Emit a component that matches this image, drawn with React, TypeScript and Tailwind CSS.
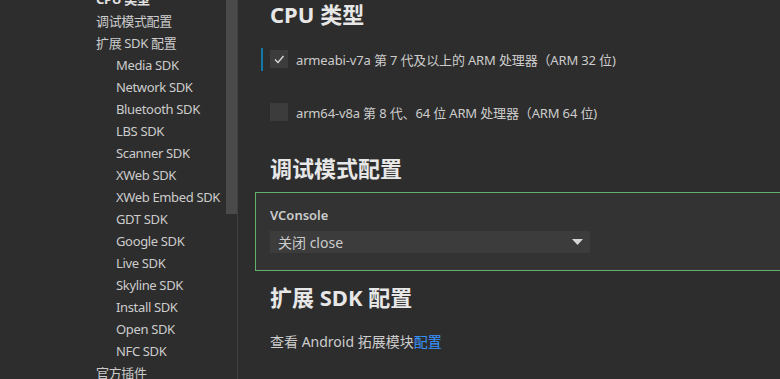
import React from "react";

const font = { fontFamily: '"Noto Sans", "Noto Sans CJK SC", sans-serif' };

const topItems: { label: string; indent: boolean; bold?: boolean }[] = [
  { label: "CPU 类型", indent: false, bold: true },
  { label: "调试模式配置", indent: false },
  { label: "扩展 SDK 配置", indent: false },
  { label: "Media SDK", indent: true },
  { label: "Network SDK", indent: true },
  { label: "Bluetooth SDK", indent: true },
  { label: "LBS SDK", indent: true },
  { label: "Scanner SDK", indent: true },
  { label: "XWeb SDK", indent: true },
  { label: "XWeb Embed SDK", indent: true },
  { label: "GDT SDK", indent: true },
  { label: "Google SDK", indent: true },
  { label: "Live SDK", indent: true },
  { label: "Skyline SDK", indent: true },
  { label: "Install SDK", indent: true },
  { label: "Open SDK", indent: true },
  { label: "NFC SDK", indent: true },
  { label: "官方插件", indent: false },
];

function Check() {
  return (
    <svg width="12" height="12" viewBox="0 0 12 12">
      <polyline points="2,6.5 5,9.5 10.5,3" fill="none" stroke="#d8d8d8" strokeWidth="1.4" />
    </svg>
  );
}

export default function App() {
  return (
    <div className="w-[780px] h-[379px] overflow-hidden bg-[#2d2d2d] flex text-[#cccccc]" style={font}>
      {/* Sidebar */}
      <div className="flex h-full shrink-0">
        <div className="w-[226px] h-full overflow-hidden">
          <div className="mt-[-11px]">
            {topItems.map((it) => (
              <div
                key={it.label}
                className={`h-[22px] flex items-center text-[13px] tracking-[-0.35px] whitespace-nowrap ${it.indent ? "pl-[116px]" : "pl-[96px]"} ${it.bold ? "font-bold text-[#e0e0e0]" : ""}`}
              >
                {it.label}
              </div>
            ))}
          </div>
        </div>
        <div className="w-[11px] h-full">
          <div className="w-full h-[214px] bg-[#4a4a4a]" />
        </div>
        <div className="w-px h-full bg-[#404040]" />
      </div>

      {/* Main */}
      <div className="flex-1 pl-[32px] overflow-hidden">
        <div className="h-[28px] leading-[28px] text-[22px] font-bold text-[#e7e7e7]">CPU 类型</div>

        <div className="mt-[20px] h-[23px] flex items-start ml-[-9px]">
          <div className="w-[2px] h-[23px] bg-[#0f7aa6]" />
          <div className="ml-[7px] mt-[2px] w-[18px] h-[18px] bg-[#3c3c3c] flex items-center justify-center">
            <Check />
          </div>
          <div className="ml-[8px] text-[13px] tracking-[-0.15px] leading-[18px] mt-[3px] whitespace-nowrap">
            armeabi-v7a 第 7 代及以上的 ARM 处理器（ARM 32 位)
          </div>
        </div>

        <div className="mt-[30px] h-[23px] flex items-start">
          <div className="mt-[2px] w-[18px] h-[18px] bg-[#3c3c3c]" />
          <div className="ml-[8px] text-[13px] tracking-[-0.15px] leading-[18px] mt-[3px] whitespace-nowrap">
            arm64-v8a 第 8 代、64 位 ARM 处理器（ARM 64 位)
          </div>
        </div>

        <div className="mt-[30px] h-[28px] leading-[28px] text-[22px] font-bold text-[#e7e7e7]">调试模式配置</div>

        <div className="mt-[10px] ml-[-15px] w-[600px] border border-[#62b06b] bg-[#333333] pl-[14px] pt-[13px] pb-[17px]">
          <div className="text-[13px] leading-[18px] font-semibold text-[#cccccc]">VConsole</div>
          <div className="mt-[7px] w-[320px] h-[22px] bg-[#3c3c3c] flex items-center justify-between pl-[8px] pr-[7px]">
            <span className="text-[14px] text-[#cccccc]">关闭 close</span>
            <svg width="11" height="6" viewBox="0 0 11 6">
              <polygon points="0,0 11,0 5.5,6" fill="#d6d6d6" />
            </svg>
          </div>
        </div>

        <div className="mt-[12px] h-[28px] leading-[28px] text-[22px] font-bold text-[#e7e7e7]">扩展 SDK 配置</div>

        <div className="mt-[22px] text-[14px] leading-[18px]">
          查看 Android 拓展模块<span className="text-[#3794ff]">配置</span>
        </div>
      </div>
    </div>
  );
}
